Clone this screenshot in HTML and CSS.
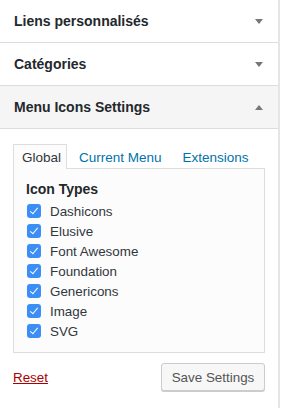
FILE: index.html
```html
<!DOCTYPE html>
<html lang="fr">

<head>
    <meta charset="UTF-8">
    <meta name="viewport" content="width=device-width, initial-scale=1.0">
    <title>Menu Icons Settings</title>
    <link rel="stylesheet" href="styles.css">
</head>

<body>
    <div class="sidebar">
        <div class="box closed">
            <h3 class="box-title">Liens personnalisés <span class="arrow down"></span></h3>
        </div>
        <div class="box closed">
            <h3 class="box-title">Catégories <span class="arrow down"></span></h3>
        </div>
        <div class="box open">
            <h3 class="box-title">Menu Icons Settings <span class="arrow up"></span></h3>
            <div class="box-inside">
                <ul class="tabs">
                    <li class="active"><a href="#">Global</a></li>
                    <li><a href="#">Current Menu</a></li>
                    <li><a href="#">Extensions</a></li>
                </ul>
                <div class="tab-panel">
                    <h4>Icon Types</h4>
                    <ul class="types">
                        <li><span class="check"></span>Dashicons</li>
                        <li><span class="check"></span>Elusive</li>
                        <li><span class="check"></span>Font Awesome</li>
                        <li><span class="check"></span>Foundation</li>
                        <li><span class="check"></span>Genericons</li>
                        <li><span class="check"></span>Image</li>
                        <li><span class="check"></span>SVG</li>
                    </ul>
                </div>
                <div class="actions">
                    <a href="#" class="reset">Reset</a>
                    <button class="save">Save Settings</button>
                </div>
            </div>
        </div>
    </div>
</body>

</html>
```

FILE: styles.css
```css
html,
body {
    margin: 0;
    padding: 0;
    height: 100%;
    background: #fff;
}

body {
    font-family: "Liberation Sans", Arial, sans-serif;
    color: #23282d;
}

.sidebar {
    width: 278px;
    min-height: 100%;
    border-right: 2px solid #e5e5e5;
}

.box {
    border-bottom: 1px solid #ddd;
}

.box.open {
    border-bottom: none;
}

.box-title {
    display: flex;
    align-items: center;
    justify-content: space-between;
    height: 42px;
    margin: 0;
    padding: 0 15px 0 14px;
    font-size: 14px;
    font-weight: bold;
    line-height: 42px;
}

.box.open .box-title {
    background-color: #f5f5f5;
    border-bottom: 1px solid #ddd;
}

.arrow {
    width: 0;
    height: 0;
    border-left: 4px solid transparent;
    border-right: 4px solid transparent;
}

.arrow.down {
    border-top: 5px solid #777;
}

.arrow.up {
    border-bottom: 5px solid #777;
}

.box-inside {
    padding: 15px 13px 0 13px;
}

.tabs {
    display: flex;
    margin: 0;
    padding: 0;
    list-style: none;
}

.tabs li {
    height: 24px;
    margin-bottom: -1px;
    margin-left: 3px;
    border: 1px solid transparent;
    border-bottom: none;
}

.tabs li.active {
    margin-left: 0;
    border-color: #ddd;
    background-color: #fcfcfc;
    position: relative;
}

.tabs a {
    display: block;
    padding: 0 8px;
    font-size: 13.5px;
    line-height: 25px;
    color: #0073aa;
    text-decoration: none;
}

.tabs li.active a {
    color: #32373c;
    padding-right: 5px;
}

.tab-panel {
    border: 1px solid #ddd;
    background-color: #fcfcfc;
    padding: 11px 12px 11px 12px;
}

.tab-panel h4 {
    margin: 0 0 3px;
    font-size: 14px;
    font-weight: bold;
    line-height: 18px;
}

.types {
    margin: 0;
    padding: 0;
    list-style: none;
}

.types li {
    display: flex;
    align-items: center;
    height: 20px;
    font-size: 13.4px;
    color: #32373c;
}

.check {
    position: relative;
    width: 14px;
    height: 14px;
    margin: 0 9px 0 1px;
    border-radius: 3px;
    background-color: #3b8ef5;
}

.check::after {
    content: "";
    position: absolute;
    left: 5px;
    top: 2px;
    width: 3px;
    height: 7px;
    border: solid #fff;
    border-width: 0 1.5px 1.5px 0;
    transform: rotate(40deg);
}

.actions {
    display: flex;
    align-items: center;
    justify-content: space-between;
    margin-top: 10px;
}

.reset {
    font-size: 13.4px;
    color: #a00;
    text-decoration: underline;
}

.save {
    width: 104px;
    height: 28px;
    padding: 0;
    border: 1px solid #ccc;
    border-radius: 3px;
    background-color: #f7f7f7;
    box-shadow: 0 1px 0 #ccc;
    font-family: "Liberation Sans", Arial, sans-serif;
    font-size: 13.4px;
    color: #555;
}
```
